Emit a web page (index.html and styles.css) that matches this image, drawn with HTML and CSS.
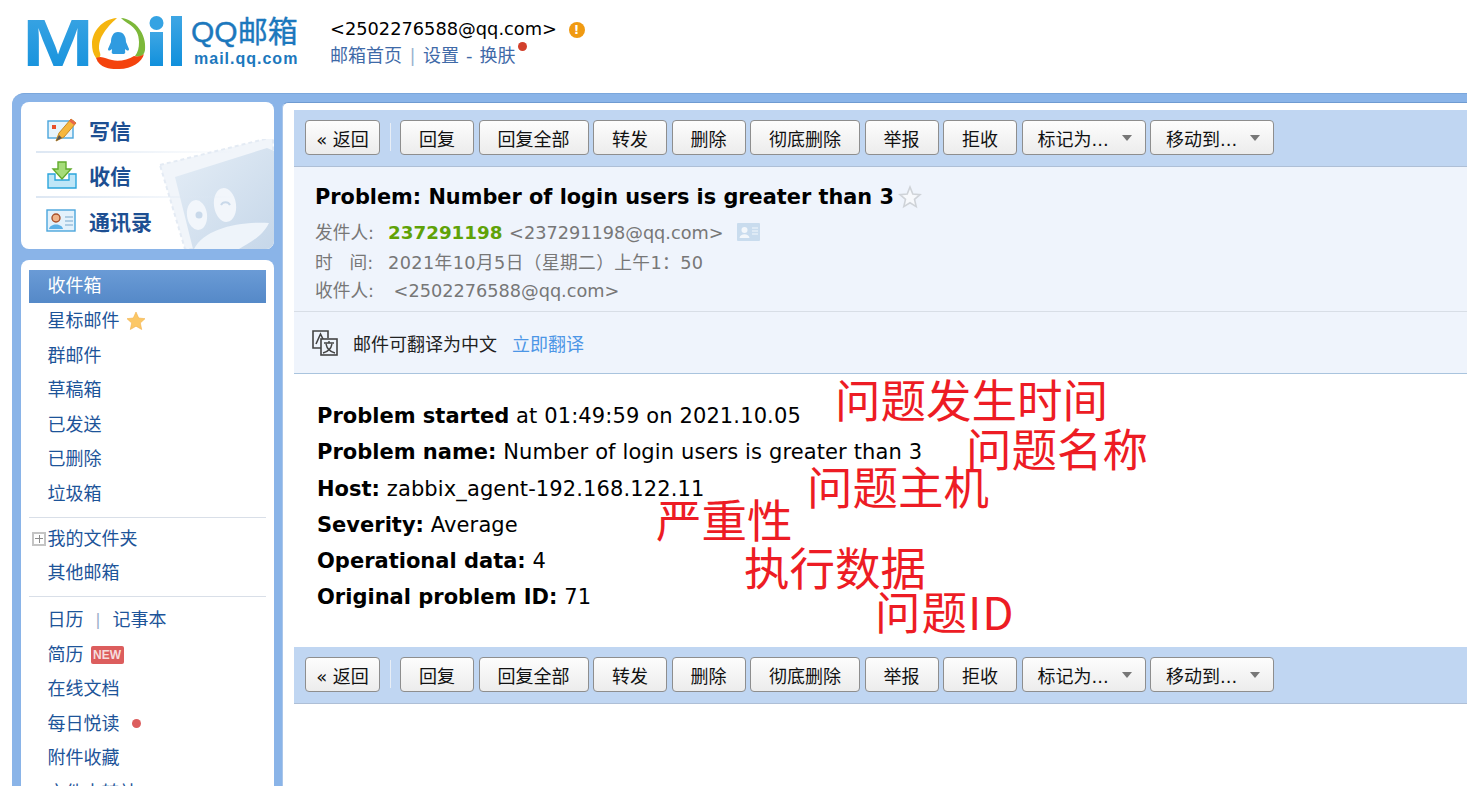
FILE: index.html
```html
<!DOCTYPE html>
<html lang="zh-CN">
<head>
    <meta charset="UTF-8">
    <title>QQ邮箱</title>
    <link rel="stylesheet" href="styles.css">
</head>
<body>
    <header class="top">
        <div class="logo">
            <svg class="logo-mark" width="166" height="56" viewBox="0 0 166 56">
                <defs>
                    <linearGradient id="logoBlue" x1="0" y1="0" x2="0" y2="1">
                        <stop offset="0" stop-color="#3ea6e4"/>
                        <stop offset="1" stop-color="#1190dc"/>
                    </linearGradient>
                </defs>
                <text x="0" y="50" class="logo-letter" fill="url(#logoBlue)" textLength="72" lengthAdjust="spacingAndGlyphs">M</text>
                <path d="M95 2 C80 3 70 16 70 28 C70 33 71 38 74 42 C78 42 79 40 78 37 C74 24 84 12 95 2 Z" fill="#f5b50f"/>
                <path d="M99 2 C104 8 117 10 117 26 C117 32 116 36 113 40 C118 42 122 40 123 34 C125 18 113 3 99 2 Z" fill="#7db83a"/>
                <path d="M74 42 C78 54 92 53 97 53 C110 53 120 46 122 38 C120 40 116 41 112 40 C106 44 96 46 90 44 C84 43 80 39 74 42 Z" fill="#f4430d"/>
                <path transform="translate(20 -1)" d="M76 17 c6 0 8 5 8 10 l3 7 c0 3 -3 1 -4 0 c0 3 1 4 -1 5 l-11 0 c-2 -1 -1 -2 -1 -5 c-1 1 -4 3 -4 0 l3 -7 c0 -5 2 -10 7 -10 z" fill="#2f9be0"/>
                <circle cx="134.5" cy="7" r="7" fill="#35a3e3"/>
                <rect x="128" y="16" width="13" height="34" fill="url(#logoBlue)"/>
                <rect x="149" y="0" width="11" height="50" fill="url(#logoBlue)"/>
            </svg>
            <div class="logo-text">
                <div class="logo-name">QQ邮箱</div>
                <div class="logo-url">mail.qq.com</div>
            </div>
        </div>
        <div class="account">
            <div class="account-mail">&lt;2502276588@qq.com&gt; <span class="warn">!</span></div>
            <div class="account-links">
                <a>邮箱首页</a><span class="bar">|</span><a>设置</a><span class="dash">-</span><a class="skin">换肤<i class="skin-dot"></i></a>
            </div>
        </div>
    </header>

    <div class="frame">
        <aside class="side">
            <div class="panel actions">
                <svg class="stamp" width="130" height="110" viewBox="0 0 130 110">
                    <defs>
                        <linearGradient id="stampFill" x1="0" y1="0" x2="1" y2="1">
                            <stop offset="0" stop-color="#e4edf6"/>
                            <stop offset="1" stop-color="#c6d7e9"/>
                        </linearGradient>
                    </defs>
                    <path d="M16 26 L129 -2 V110 H41 Z" fill="#f1f5fa" stroke="#e4ebf4" stroke-width="2" stroke-dasharray="4 3"/>
                    <path d="M31 38 L123 9 L130 12 V110 H49 Z" fill="url(#stampFill)"/>
                    <ellipse cx="53" cy="76" rx="10" ry="15" fill="#f2f6fb" transform="rotate(-8 53 76)"/>
                    <ellipse cx="81" cy="66" rx="11" ry="17" fill="#f2f6fb" transform="rotate(-8 81 66)"/>
                    <circle cx="55" cy="76" r="3.5" fill="#c9d9ea"/>
                    <path d="M77 66 a5 5 0 0 1 9 0" fill="none" stroke="#c9d9ea" stroke-width="2"/>
                    <path d="M50 110 C60 90 95 82 125 84 C118 98 105 104 95 110 Z" fill="#eef4fa"/>
                </svg>
                <a class="action">
                    <svg width="32" height="26" viewBox="0 0 32 26">
                        <rect x="2" y="4" width="25" height="17" fill="#e8f4fb" stroke="#4aa5dc" stroke-width="1.4"/>
                        <rect x="6" y="8" width="4" height="4" fill="#e8502a"/>
                        <path d="M10 24 L13 16 L25 2 L30 6 L18 20 Z" fill="#f6b73c" stroke="#c98a22" stroke-width="1"/>
                        <path d="M25 2 L30 6 L28 8 L23 4 Z" fill="#e8674a"/>
                        <path d="M10 24 L13 18 L16 21 Z" fill="#555"/>
                    </svg>
                    <span>写信</span>
                </a>
                <a class="action">
                    <svg width="32" height="28" viewBox="0 0 32 28">
                        <path d="M2 13 H9 V19 H23 V13 H30 V27 H2 Z" fill="#bfe6f7" stroke="#2ba5dc" stroke-width="1.4"/>
                        <path d="M12 1 H20 V8 H25 L16 18 L7 8 H12 Z" fill="#a6dc7a" stroke="#62ab2e" stroke-width="1.4"/>
                    </svg>
                    <span>收信</span>
                </a>
                <a class="action">
                    <svg width="32" height="24" viewBox="0 0 32 24">
                        <rect x="1" y="1" width="28" height="21" fill="#e3f1fb" stroke="#4aa5dc" stroke-width="1.4"/>
                        <circle cx="10" cy="9" r="4" fill="#f0b48a" stroke="#a8502a" stroke-width="1.4"/>
                        <path d="M3 20 C4 14 16 14 17 20 Z" fill="#5bb0e6"/>
                        <path d="M19 8 H27 M19 12 H27 M19 16 H27" stroke="#9cc0dc" stroke-width="1.4"/>
                    </svg>
                    <span>通讯录</span>
                </a>
            </div>

            <nav class="panel folders">
                <a class="folder current">收件箱</a>
                <a class="folder">星标邮件 <svg class="star" width="20" height="20" viewBox="0 0 20 20"><path d="M10 1 L12.7 7 L19 7.7 L14.3 12 L15.7 18.5 L10 15.2 L4.3 18.5 L5.7 12 L1 7.7 L7.3 7 Z" fill="#fbc766" stroke="#f2b04a" stroke-width="0.6"/></svg></a>
                <a class="folder">群邮件</a>
                <a class="folder">草稿箱</a>
                <a class="folder">已发送</a>
                <a class="folder">已删除</a>
                <a class="folder">垃圾箱</a>
                <div class="rule"></div>
                <a class="folder"><i class="plus"></i>我的文件夹</a>
                <a class="folder">其他邮箱</a>
                <div class="rule rule-wide"></div>
                <a class="folder">日历<span class="pipe">|</span>记事本</a>
                <a class="folder">简历 <span class="new">NEW</span></a>
                <a class="folder">在线文档</a>
                <a class="folder">每日悦读 <i class="red-dot"></i></a>
                <a class="folder">附件收藏</a>
                <a class="folder">文件中转站</a>
            </nav>
        </aside>

        <main class="main">
            <div class="toolbar">
                <button class="btn back">« 返回</button>
                <span class="sep"></span>
                <button class="btn">回复</button>
                <button class="btn">回复全部</button>
                <button class="btn">转发</button>
                <button class="btn">删除</button>
                <button class="btn">彻底删除</button>
                <button class="btn">举报</button>
                <button class="btn">拒收</button>
                <button class="btn menu">标记为...<i class="caret"></i></button>
                <button class="btn menu">移动到...<i class="caret"></i></button>
            </div>

            <section class="mail-head">
                <h1 class="subject">Problem: Number of login users is greater than 3 <svg class="star-empty" width="24" height="24" viewBox="0 0 24 24"><path d="M12 2 L14.8 9 L22 9.6 L16.5 14.4 L18.2 21.6 L12 17.8 L5.8 21.6 L7.5 14.4 L2 9.6 L9.2 9 Z" fill="#f7f9fc" stroke="#cfd3d8" stroke-width="1.6"/></svg></h1>
                <div class="meta"><span class="meta-key">发件人:</span><b class="sender">237291198</b> &lt;237291198@qq.com&gt;<svg class="card" width="24" height="19" viewBox="0 0 24 19"><rect width="23" height="18" rx="1" fill="#c9dcee"/><circle cx="7.5" cy="7" r="3" fill="#f3f7fb"/><path d="M2.5 15 C3 10 12 10 12.5 15 Z" fill="#f3f7fb"/><path d="M15 5 H21 M15 8 H21 M15 11 H21" stroke="#f3f7fb" stroke-width="1.2"/></svg></div>
                <div class="meta meta-when"><span class="meta-key">时&nbsp;&nbsp;&nbsp;间:</span><span class="meta-time">2021年10月5日（星期二）上午1：50</span></div>
                <div class="meta"><span class="meta-key">收件人:</span>&nbsp;&lt;2502276588@qq.com&gt;</div>
            </section>

            <section class="translate">
                <svg width="28" height="28" viewBox="0 0 28 28">
                    <path d="M12 19 H2 V2 H17 V9" fill="none" stroke="#444" stroke-width="1.6"/>
                    <path d="M5 15 L9.5 5 L13 12" fill="none" stroke="#444" stroke-width="1.6"/>
                    <rect x="10" y="10" width="16" height="16" fill="#eff4fc" stroke="#444" stroke-width="1.6"/>
                    <path d="M13 14 H23 M18 12 V14 M15 15 C16 20 20 23 24 24 M21 15 C20 20 16 23 12 24" fill="none" stroke="#444" stroke-width="1.4"/>
                </svg>
                <span>邮件可翻译为中文</span><a class="translate-link">立即翻译</a>
            </section>

            <section class="mail-body">
                <p><b>Problem started</b> at 01:49:59 on 2021.10.05</p>
                <p><b>Problem name:</b> Number of login users is greater than 3</p>
                <p><b>Host:</b> zabbix_agent-192.168.122.11</p>
                <p><b>Severity:</b> Average</p>
                <p><b>Operational data:</b> 4</p>
                <p><b>Original problem ID:</b> 71</p>
            </section>

            <div class="toolbar">
                <button class="btn back">« 返回</button>
                <span class="sep"></span>
                <button class="btn">回复</button>
                <button class="btn">回复全部</button>
                <button class="btn">转发</button>
                <button class="btn">删除</button>
                <button class="btn">彻底删除</button>
                <button class="btn">举报</button>
                <button class="btn">拒收</button>
                <button class="btn menu">标记为...<i class="caret"></i></button>
                <button class="btn menu">移动到...<i class="caret"></i></button>
            </div>
        </main>
    </div>

    <span class="note note-time">问题发生时间</span>
    <span class="note note-name">问题名称</span>
    <span class="note note-host">问题主机</span>
    <span class="note note-severity">严重性</span>
    <span class="note note-data">执行数据</span>
    <span class="note note-id">问题ID</span>
</body>
</html>
```

FILE: styles.css
```css
* {
    box-sizing: border-box;
}
html, body {
    height: 786px;
    overflow: hidden;
}
body {
    margin: 0;
    position: relative;
    background: #fff;
    color: #000;
    font-family: "DejaVu Sans", "Noto Sans CJK SC", sans-serif;
    font-size: 18px;
}
.top {
    height: 93px;
    display: flex;
    padding: 14px 0 0 22px;
}
.logo {
    display: flex;
    width: 308px;
}
.logo-mark {
    flex: none;
    margin-top: 2px;
}
.logo-letter {
    font-family: "Liberation Sans", sans-serif;
    font-weight: bold;
    font-size: 66px;
}
.logo-text {
    margin: 1px 0 0 3px;
    color: #1c78bd;
    font-family: "Liberation Sans", "Noto Sans CJK SC", sans-serif;
}
.logo-name {
    font-size: 30px;
    line-height: 34px;
    -webkit-text-stroke: 0.4px #1c78bd;
}
.logo-url {
    margin: 1px 0 0 3px;
    font-size: 16px;
    line-height: 18px;
    font-weight: bold;
    letter-spacing: 1px;
}
.account {
    padding-top: 1px;
}
.account-mail {
    font-size: 17.8px;
    line-height: 27px;
}
.warn {
    display: inline-block;
    width: 16px;
    height: 16px;
    margin-left: 6px;
    border-radius: 50%;
    background: #f09a12;
    color: #fff;
    font-size: 12px;
    font-weight: bold;
    line-height: 16px;
    text-align: center;
    vertical-align: 1px;
}
.account-links {
    color: #3f6aa8;
    line-height: 27px;
}
.bar {
    margin: 0 7.5px;
    color: #9cb4d0;
}
.dash {
    margin: 0 7px;
}
.skin {
    position: relative;
}
.skin-dot {
    position: absolute;
    top: -3px;
    right: -11px;
    width: 9px;
    height: 9px;
    border-radius: 50%;
    background: #d2402c;
}
.frame {
    height: 693px;
    margin-left: 12px;
    padding: 8px 0 0 9px;
    display: flex;
    gap: 8px;
    background: #8ab4e8;
    border-top: 1px solid #7ba7dc;
    border-radius: 12px 0 0 0;
}
.side {
    width: 253px;
    flex: none;
    display: flex;
    flex-direction: column;
    gap: 11px;
}
.panel {
    background: #fff;
    border-radius: 8px 8px 0 0;
}
.actions {
    position: relative;
    flex: none;
    height: 147px;
    padding: 6px 0 0 15px;
    border-radius: 8px;
    overflow: hidden;
}
.stamp {
    position: absolute;
    right: 0;
    bottom: 0;
}
.action {
    position: relative;
    display: flex;
    align-items: center;
    gap: 11px;
    width: 200px;
    height: 45px;
    padding-left: 10px;
    border-bottom: 2px solid;
    border-image: linear-gradient(to right, #dde7f3, transparent) 1;
    color: #1d4f92;
    font-size: 21px;
    font-weight: bold;
}
.action:last-of-type {
    border-bottom: 0;
}
.action svg {
    flex: none;
}
.folders {
    flex: 1;
    padding: 10px 8px 0;
    color: #1d5499;
}
.folder {
    display: flex;
    align-items: center;
    position: relative;
    flex: none;
    height: 34.5px;
    padding-left: 18.5px;
    line-height: 34px;
}
.folder.current {
    height: 33px;
    margin-bottom: 1px;
    padding-bottom: 2px;
    background: linear-gradient(#6a9bd6, #5589c8);
    color: #fff;
}
.star {
    margin-left: 6px;
}
.rule {
    height: 1px;
    margin: 6px 0 3.5px;
    background: #d9dfe8;
}
.rule-wide {
    margin: 5.5px 0 6px;
}
.plus {
    position: absolute;
    left: 3px;
    top: 10px;
    width: 14px;
    height: 14px;
    border: 2px solid #c4c4c4;
    background: linear-gradient(#8a8a8a, #8a8a8a) center / 8px 1px no-repeat, linear-gradient(#8a8a8a, #8a8a8a) center / 1px 8px no-repeat;
}
.pipe {
    margin: 0 11.8px;
    color: #9aaec8;
    font-size: 16px;
}
.new {
    margin-left: 7px;
    width: 33px;
    height: 18px;
    border-radius: 2px;
    background: #dc5d5d;
    color: #f6dcdc;
    font-family: "Liberation Sans", sans-serif;
    font-size: 12px;
    font-weight: bold;
    line-height: 18px;
    text-align: center;
}
.red-dot {
    margin-left: 12px;
    width: 9px;
    height: 9px;
    border-radius: 50%;
    background: #dc5d5d;
}
.main {
    flex: 1;
    min-width: 0;
    padding: 7px 0 0 11px;
    background: #fff;
    border-left: 1px solid #a9c6ea;
    border-top: 1px solid #6f9bd1;
    border-radius: 6px 0 0 0;
}
.toolbar {
    height: 57px;
    padding-top: 10px;
    display: flex;
    align-items: flex-start;
    gap: 4.5px;
    padding-left: 11px;
    background: #c0d6f2;
    border-bottom: 1px solid #aebfd6;
}
.btn {
    height: 35px;
    width: 74px;
    padding: 1px 0 0;
    border: 1px solid #8e8e8e;
    border-radius: 4px;
    background: linear-gradient(#fdfdfd, #ececec);
    color: #111;
    font-family: inherit;
    font-size: 18px;
}
.btn:nth-of-type(3), .btn:nth-of-type(6) {
    width: 110px;
}
.back {
    width: 75px;
}
.menu {
    display: flex;
    align-items: center;
    width: 124px;
    padding-left: 15px;
}
.caret {
    margin-left: 13px;
    border: 5.5px solid transparent;
    border-top: 6px solid #777;
    border-bottom: 0;
}
.sep {
    width: 1px;
    height: 28px;
    margin: 3px 5px;
    background: #e8eef6;
}
.mail-head {
    height: 145px;
    padding: 14px 0 0 21px;
    background: #eff4fc;
    border-bottom: 1px solid #d8dee6;
}
.subject {
    display: flex;
    align-items: center;
    margin: 0;
    height: 32px;
    font-size: 20.85px;
    font-weight: bold;
    white-space: pre;
}
.star-empty {
    margin-left: -3px;
}
.meta {
    height: 29px;
    color: #777;
    font-size: 17.7px;
    line-height: 29px;
    white-space: nowrap;
}
.subject + .meta {
    margin-top: 5px;
}
.meta-when {
    margin: 2px 0 -1px;
}
.meta-key {
    display: inline-block;
    width: 73px;
}
.meta-time {
    letter-spacing: 0.4px;
}
.sender {
    margin-right: 1px;
    color: #5fa207;
    font-size: 18.3px;
}
.card {
    margin-left: 13px;
    vertical-align: -3px;
}
.translate {
    display: flex;
    align-items: center;
    height: 62px;
    padding-left: 17px;
    background: #eff4fc;
    border-bottom: 1px solid #a9c4de;
    color: #222;
}
.translate svg {
    margin-right: 14px;
}
.translate-link {
    margin-left: 15px;
    color: #4c96e6;
}
.mail-body {
    height: 273px;
    padding: 24px 0 0 23px;
}
.mail-body p {
    margin: 0;
    height: 36.3px;
    line-height: 36px;
    font-size: 21px;
    letter-spacing: 0.12px;
    white-space: nowrap;
}
.mail-body b {
    letter-spacing: 0;
}
.note {
    position: absolute;
    color: #ed1c24;
    font-family: "Noto Sans CJK SC", sans-serif;
    font-size: 45.5px;
    line-height: 44px;
    white-space: nowrap;
}
.note-time { left: 835px; top: 376px; }
.note-name { left: 966px; top: 425px; }
.note-host { left: 807px; top: 463px; }
.note-severity { left: 656px; top: 496px; }
.note-data { left: 744px; top: 544px; }
.note-id { left: 875px; top: 588px; letter-spacing: 1px; }
```
